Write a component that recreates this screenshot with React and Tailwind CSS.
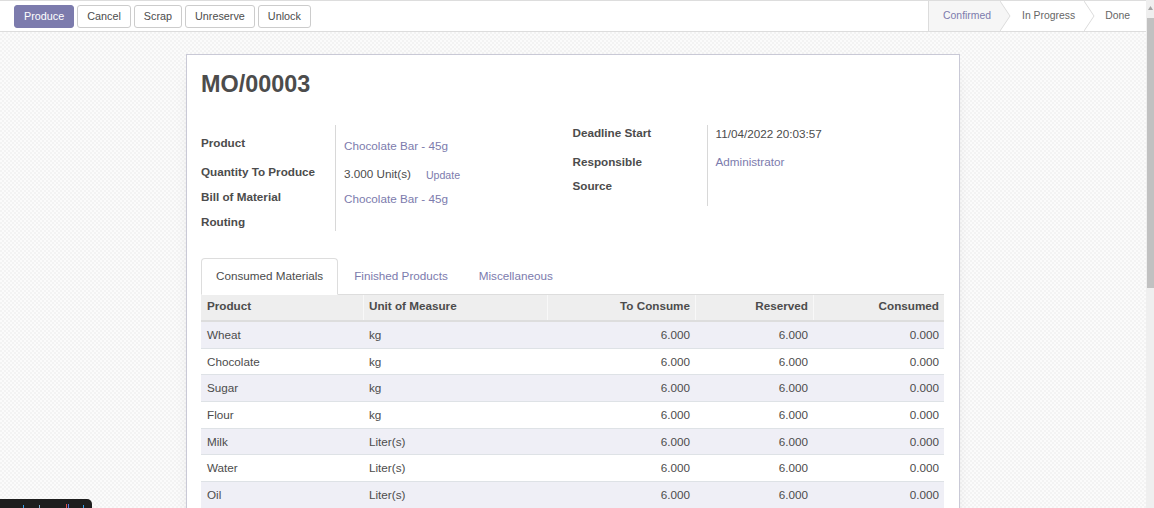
import React from "react";

const rows = [
  ["Wheat", "kg"],
  ["Chocolate", "kg"],
  ["Sugar", "kg"],
  ["Flour", "kg"],
  ["Milk", "Liter(s)"],
  ["Water", "Liter(s)"],
  ["Oil", "Liter(s)"],
];

function Btn({ children, primary }) {
  return (
    <button
      className={
        primary
          ? "h-[23px] px-[9px] rounded-[3px] border border-[#7c7bad] bg-[#7c7bad] text-white text-[10.8px] leading-none"
          : "h-[23px] px-[9px] rounded-[3px] border border-[#cccccc] bg-white text-[#4c4c4c] text-[10.8px] leading-none"
      }
    >
      {children}
    </button>
  );
}

function Arrow({ fill }) {
  return (
    <svg
      className="absolute top-0 left-full h-[30px] w-[11px] z-10"
      viewBox="0 0 11 30"
      preserveAspectRatio="none"
    >
      <polygon points="0,0 10,15 0,30" fill={fill} />
      <polyline points="0,0 10,15 0,30" fill="none" stroke="#dcdcdc" strokeWidth="1" />
    </svg>
  );
}

export default function App() {
  return (
    <div
      className="relative w-full h-[508px] overflow-hidden flex text-[#4c4c4c]"
      style={{ fontFamily: '"Liberation Sans", Arial, sans-serif' }}
    >
      <div className="flex-1 flex flex-col min-w-0 bg-[image:repeating-conic-gradient(#f3f3f3_0_25%,#fbfbfb_0_50%)] bg-[length:4px_4px]">
        {/* Control panel */}
        <div className="h-[32px] flex-none bg-white border-t border-b border-[#dddddd] flex justify-between">
          <div className="flex items-start gap-[3px] pl-[14px] pt-[4px]">
            <Btn primary>Produce</Btn>
            <Btn>Cancel</Btn>
            <Btn>Scrap</Btn>
            <Btn>Unreserve</Btn>
            <Btn>Unlock</Btn>
          </div>
          <div className="flex h-full border-l border-[#dcdcdc] text-[10.4px]">
            <div className="relative h-full flex items-center pl-[14px] pr-[9px] bg-[#f6f6f6] text-[#7c7bad]">
              Confirmed
              <Arrow fill="#f6f6f6" />
            </div>
            <div className="relative h-full flex items-center pl-[22px] pr-[9px] text-[#666666]">
              In Progress
              <Arrow fill="#ffffff" />
            </div>
            <div className="h-full flex items-center pl-[21px] pr-[16px] text-[#666666]">
              Done
            </div>
          </div>
        </div>

        {/* Sheet */}
        <div className="mx-auto mt-[22px] w-[774px] flex-none bg-white border border-[#c9c9d6] shadow-[0_5px_20px_-15px_rgba(0,0,0,0.4)] pl-[14px] pr-[15px] pt-[15px] pb-[40px] text-[11.7px]">
          <h1 className="text-[23.4px] leading-[28px] font-bold text-[#4c4c4c]">MO/00003</h1>

          <div className="grid grid-cols-2 mt-[27px]">
            {/* left group */}
            <div className="flex">
              <div className="w-[135px] h-[106px] border-r border-[#d8d8d8] font-bold leading-[16px]">
                <div className="mt-[10px] h-[16px]">Product</div>
                <div className="mt-[13px] h-[16px]">Quantity To Produce</div>
                <div className="mt-[9px] h-[16px]">Bill of Material</div>
                <div className="mt-[9px] h-[16px]">Routing</div>
              </div>
              <div className="pl-[8px] leading-[16px]">
                <div className="mt-[13px] h-[16px] text-[#7c7bad]">Chocolate Bar - 45g</div>
                <div className="mt-[12px] h-[16px] flex items-center">
                  <span>3.000 Unit(s)</span>
                  <span className="ml-[15px] text-[10.6px] text-[#7c7bad] mt-[2px]">Update</span>
                </div>
                <div className="mt-[9px] h-[16px] text-[#7c7bad]">Chocolate Bar - 45g</div>
              </div>
            </div>
            {/* right group */}
            <div className="flex self-start">
              <div className="w-[135px] h-[81px] border-r border-[#d8d8d8] font-bold leading-[16px]">
                <div className="h-[16px]">Deadline Start</div>
                <div className="mt-[13px] h-[16px]">Responsible</div>
                <div className="mt-[8px] h-[16px]">Source</div>
              </div>
              <div className="pl-[8px] leading-[16px]">
                <div className="mt-[1px] h-[16px]">11/04/2022 20:03:57</div>
                <div className="mt-[12px] h-[16px] text-[#7c7bad]">Administrator</div>
              </div>
            </div>
          </div>

          {/* Tabs */}
          <div className="mt-[27px] flex border-b border-[#dddddd]">
            <div className="h-[37px] mb-[-1px] pb-[2px] px-[14px] flex items-center border border-[#dddddd] border-b-white rounded-t-[4px] bg-white text-[#4c4c4c] mr-[1px]">
              Consumed Materials
            </div>
            <div className="h-[37px] mb-[-1px] pb-[2px] px-[14px] flex items-center border border-transparent text-[#7c7bad] mr-[1px]">
              Finished Products
            </div>
            <div className="h-[37px] mb-[-1px] pb-[2px] px-[14px] flex items-center border border-transparent text-[#7c7bad]">
              Miscellaneous
            </div>
          </div>

          {/* Table */}
          <div className="w-[743px]">
            <div className="grid grid-cols-[162px_184px_148px_118px_131px] h-[27px] bg-[#eeeeee] border-b-2 border-[#dddddd] font-bold">
              <div className="flex items-center pl-[6px] pb-[3px]">Product</div>
              <div className="flex items-center pl-[5px] pb-[3px] border-l border-[#f8f8f8]">Unit of Measure</div>
              <div className="flex items-center justify-end pr-[5px] pb-[3px] border-l border-[#f8f8f8]">To Consume</div>
              <div className="flex items-center justify-end pr-[5px] pb-[3px] border-l border-[#f8f8f8]">Reserved</div>
              <div className="flex items-center justify-end pr-[5px] pb-[3px] border-l border-[#f8f8f8]">Consumed</div>
            </div>
            {rows.map(([name, uom], i) => (
              <div
                key={name}
                className={
                  "grid grid-cols-[162px_184px_148px_118px_131px] h-[26.67px] border-b border-[#dee2e6] " +
                  (i % 2 === 0 ? "bg-[#efeff6]" : "bg-white")
                }
              >
                <div className="flex items-center pl-[6px]">{name}</div>
                <div className="flex items-center pl-[6px]">{uom}</div>
                <div className="flex items-center justify-end pr-[5px]">6.000</div>
                <div className="flex items-center justify-end pr-[5px]">6.000</div>
                <div className="flex items-center justify-end pr-[5px]">0.000</div>
              </div>
            ))}
          </div>
        </div>
      </div>

      {/* Scrollbar */}
      <div className="w-[8px] flex-none h-full bg-[#efefef] flex flex-col items-end">
        <div className="h-[16px] w-full flex items-center justify-center">
          <svg width="5" height="4" viewBox="0 0 5 4">
            <polygon points="2.5,0 5,4 0,4" fill="#a3a3a3" />
          </svg>
        </div>
        <div className="w-[7px] h-[270px] mt-[2px] bg-[#c1c1c1]" />
      </div>

      {/* bottom-left dark widget */}
      <div className="absolute left-0 bottom-0 w-[92px] h-[9px] bg-[#1e1e1e] rounded-tr-[5px]">
        <span className="absolute bottom-0 left-[23px] w-[1px] h-[3px] bg-[#3aa0e8]" />
        <span className="absolute bottom-0 left-[39px] w-[1px] h-[3px] bg-[#7fb0d0]" />
        <span className="absolute bottom-0 left-[66px] w-[1px] h-[4px] bg-[#e05050]" />
        <span className="absolute bottom-0 left-[68px] w-[1px] h-[4px] bg-[#5a7ae0]" />
        <span className="absolute bottom-0 left-[83px] w-[1px] h-[3px] bg-[#3aa0e8]" />
      </div>
    </div>
  );
}
